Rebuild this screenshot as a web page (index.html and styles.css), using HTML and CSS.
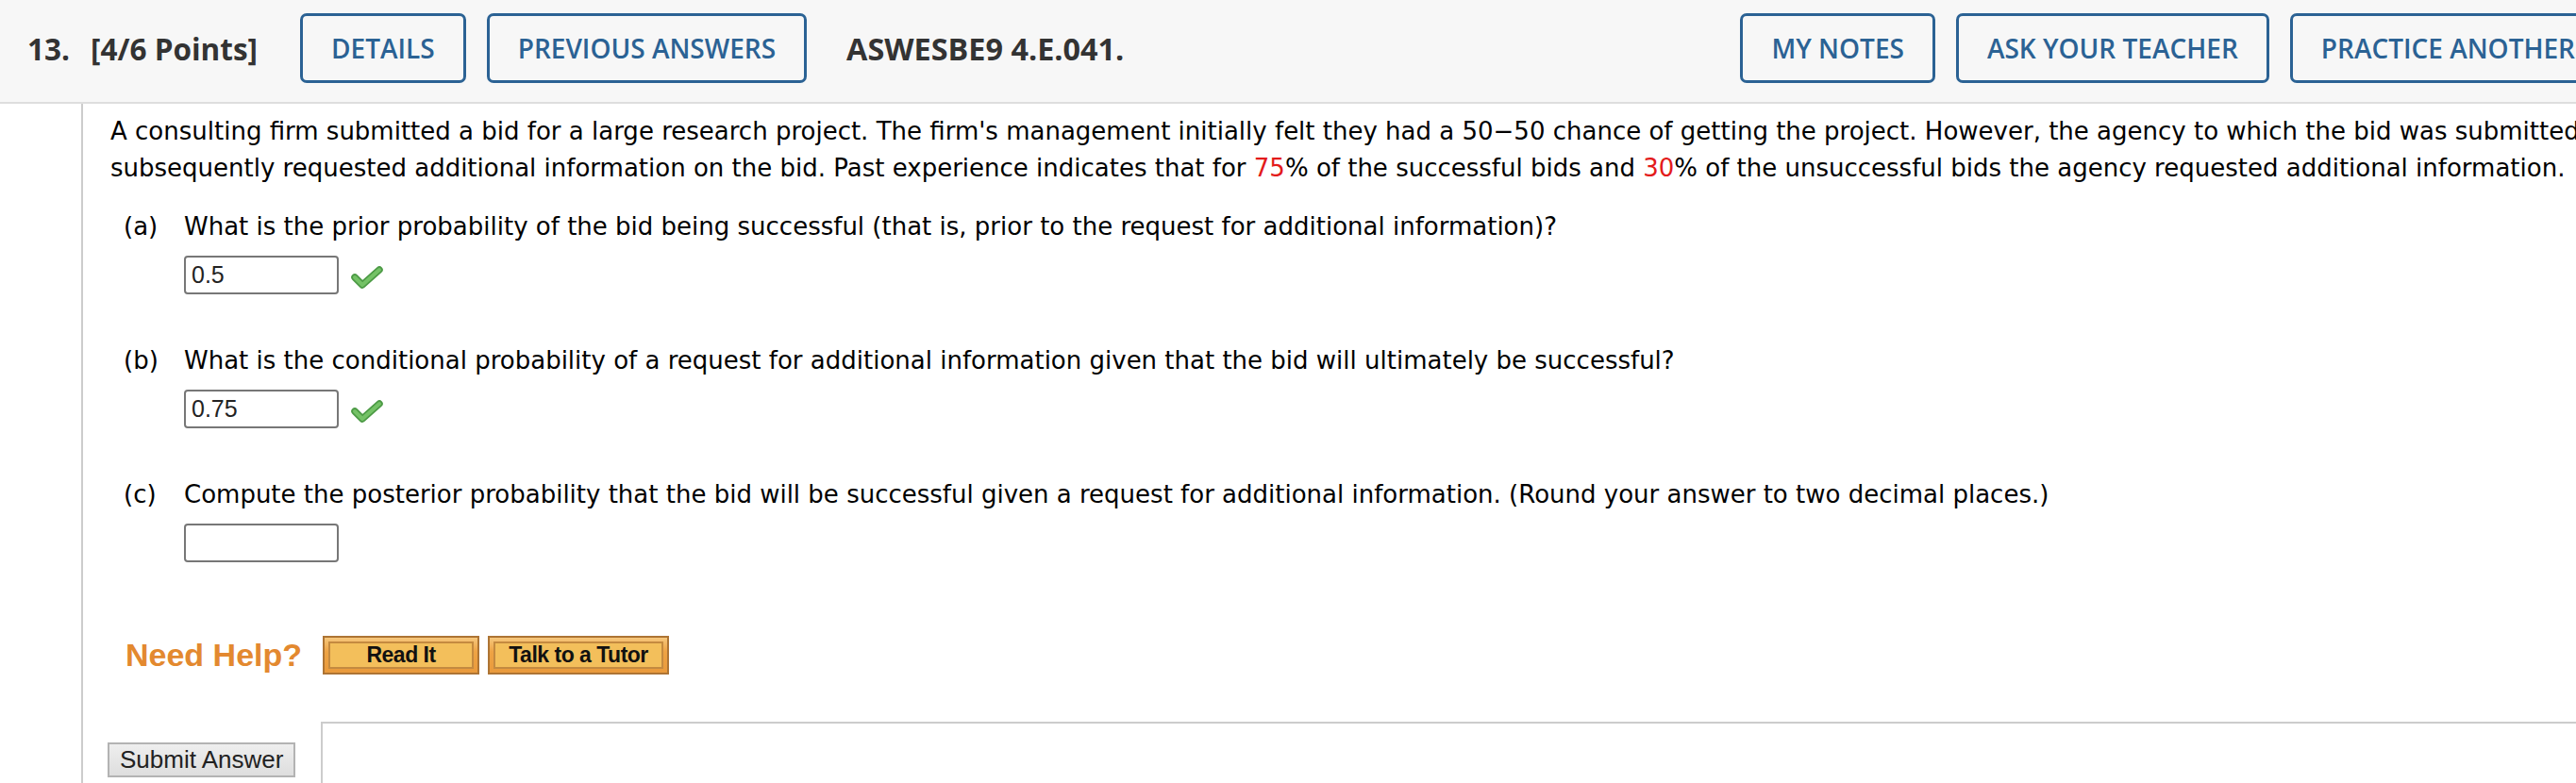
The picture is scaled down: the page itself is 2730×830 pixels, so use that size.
FILE: index.html
```
<!DOCTYPE html>
<html>
<head>
<meta charset="utf-8">
<link rel="stylesheet" href="styles.css">
</head>
<body>
<div class="header">
  <span class="qnum">13.</span>
  <span class="qnum pts">[4/6 Points]</span>
  <span class="btn">DETAILS</span>
  <span class="btn">PREVIOUS ANSWERS</span>
  <span class="qnum code">ASWESBE9 4.E.041.</span>
  <div class="right">
    <span class="btn">MY NOTES</span>
    <span class="btn">ASK YOUR TEACHER</span>
    <span class="btn">PRACTICE ANOTHER</span>
  </div>
</div>
<div class="main">
  <div class="gutter"></div>
  <div class="content">
    <p class="stem">A consulting firm submitted a bid for a large research project. The firm's management initially felt they had a 50&minus;50 chance of getting the project. However, the agency to which the bid was submitted<br>subsequently requested additional information on the bid. Past experience indicates that for <span class="red">75</span>% of the successful bids and <span class="red">30</span>% of the unsuccessful bids the agency requested additional information.</p>

    <div class="part">
      <div class="q"><span class="lbl">(a)</span><span>What is the prior probability of the bid being successful (that is, prior to the request for additional information)?</span></div>
      <div class="ans">
        <span class="inp">0.5</span>
        <svg class="check" width="34" height="26" viewBox="0 0 34 26"><path d="M4 13 L12 21 L30 5" fill="none" stroke="#4c9a45" stroke-width="7.5" stroke-linecap="round" stroke-linejoin="round"/><path d="M4 13 L12 21 L30 5" fill="none" stroke="#74c266" stroke-width="4" stroke-linecap="round" stroke-linejoin="round"/></svg>
      </div>
    </div>

    <div class="part">
      <div class="q"><span class="lbl">(b)</span><span>What is the conditional probability of a request for additional information given that the bid will ultimately be successful?</span></div>
      <div class="ans">
        <span class="inp">0.75</span>
        <svg class="check" width="34" height="26" viewBox="0 0 34 26"><path d="M4 13 L12 21 L30 5" fill="none" stroke="#4c9a45" stroke-width="7.5" stroke-linecap="round" stroke-linejoin="round"/><path d="M4 13 L12 21 L30 5" fill="none" stroke="#74c266" stroke-width="4" stroke-linecap="round" stroke-linejoin="round"/></svg>
      </div>
    </div>

    <div class="part">
      <div class="q"><span class="lbl">(c)</span><span>Compute the posterior probability that the bid will be successful given a request for additional information. (Round your answer to two decimal places.)</span></div>
      <div class="ans">
        <span class="inp"></span>
      </div>
    </div>

    <div class="help">
      <span class="need">Need Help?</span>
      <span class="hbtn read"><span class="hin">Read It</span></span>
      <span class="hbtn tutor"><span class="hin">Talk to a Tutor</span></span>
    </div>

    <div class="submit-row">
      <span class="submit">Submit Answer</span>
      <div class="box"></div>
    </div>
  </div>
</div>
</body>
</html>
```
FILE: styles.css
```
html, body {
  margin: 0;
  padding: 0;
  background: #ffffff;
  overflow: hidden;
}
body {
  width: 2730px;
  height: 830px;
}
.header {
  box-sizing: border-box;
  width: 2762px;
  height: 110px;
  padding: 0 0 6px 29px;
  display: flex;
  align-items: center;
  background: #f7f7f7;
  border-bottom: 2px solid #dedede;
  white-space: nowrap;
}
.qnum {
  font-family: "Open Sans", "DejaVu Sans", sans-serif;
  font-weight: 700;
  font-size: 31.5px;
  color: #333333;
}
.pts {
  margin-left: 22px;
  margin-right: 45px;
}
.btn {
  box-sizing: border-box;
  height: 74px;
  display: flex;
  align-items: center;
  padding: 0 30px;
  border: 3px solid #2b6294;
  border-radius: 7px;
  font-family: "Open Sans", "DejaVu Sans", sans-serif;
  font-weight: 600;
  font-size: 28px;
  color: #2b6294;
}
.btn + .btn {
  margin-left: 22px;
}
.code {
  margin-left: 42px;
  font-size: 32.4px;
}
.right {
  margin-left: auto;
  display: flex;
}
.main {
  display: flex;
  min-height: 720px;
}
.gutter {
  width: 86px;
  flex: none;
  border-right: 2px solid #cccccc;
}
.content {
  flex: none;
  width: 2700px;
  padding-top: 10px;
  font-family: "DejaVu Sans", Verdana, sans-serif;
  font-size: 26px;
  line-height: 35px;
  color: #000000;
}
.stem {
  margin: 0 0 0 29px;
  line-height: 39px;
  white-space: nowrap;
}
.red {
  color: #e31b1b;
}
.part {
  margin-left: 35px;
  margin-top: 25px;
}
.part + .part {
  margin-top: 53px;
}
.q {
  display: flex;
  white-space: nowrap;
}
.lbl {
  box-sizing: border-box;
  width: 72px;
  padding-left: 8px;
  flex: none;
}
.ans {
  margin-left: 72px;
  margin-top: 13px;
  display: flex;
  align-items: center;
  height: 41px;
}
.inp {
  box-sizing: border-box;
  width: 164px;
  height: 41px;
  border: 2px solid #777777;
  border-radius: 4px;
  padding: 0 6px;
  font-family: "Liberation Sans", Arial, sans-serif;
  font-size: 25px;
  line-height: 37px;
  color: #222222;
}
.check {
  margin-left: 13px;
  margin-top: 4px;
}
.help {
  margin-top: 78px;
  margin-left: 45px;
  display: flex;
  align-items: center;
  height: 41px;
}
.need {
  font-family: "Liberation Sans", Arial, sans-serif;
  font-weight: 700;
  font-size: 34px;
  color: #e3892f;
  margin-right: 22px;
}
.hbtn {
  box-sizing: border-box;
  height: 41px;
  padding: 4px;
  border: 2px solid #ad7434;
  background: linear-gradient(#f6c77c, #eea344 40%, #e99a3c);
  display: flex;
}
.hbtn + .hbtn {
  margin-left: 9px;
}
.read {
  width: 166px;
}
.tutor {
  width: 192px;
}
.hin {
  flex: 1;
  display: flex;
  align-items: center;
  justify-content: center;
  background: #f3bf5b;
  border: 2px solid #c48a40;
  font-family: "Liberation Sans", Arial, sans-serif;
  font-weight: 700;
  font-size: 23px;
  letter-spacing: -0.5px;
  color: #111111;
}
.submit-row {
  margin-top: 50px;
  display: flex;
  align-items: flex-start;
}
.submit {
  box-sizing: border-box;
  margin-left: 26px;
  margin-top: 22px;
  width: 204px;
  height: 37px;
  border: 2px solid #b3b3b3;
  background: linear-gradient(#eeeeee, #dedede);
  font-family: "Liberation Sans", Arial, sans-serif;
  font-size: 26px;
  line-height: 33px;
  text-align: center;
  color: #222222;
}
.box {
  margin-left: 27px;
  width: 2500px;
  height: 120px;
  border: 2px solid #cccccc;
}
```
